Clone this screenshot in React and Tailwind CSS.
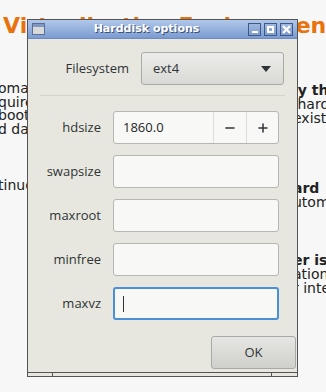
import { Minus, Plus } from 'lucide-react';

const fields = ['swapsize', 'maxroot', 'minfree'];

const PageText = () => (
  <div className="relative h-[392px] overflow-hidden bg-[#f7f7f7] font-['DejaVu_Sans',sans-serif] text-[#222]">
    <h1 className="absolute left-[3px] top-[9px] whitespace-nowrap text-[22px] font-bold text-[#e8720c]">
      Virtualisation Environment
    </h1>
    <div className="absolute left-[-2px] top-[82px] text-[14px] leading-[13.5px] whitespace-nowrap">
      <p>omatically</p>
      <p>quires</p>
      <p>boot the</p>
      <p>d data</p>
      <p className="mt-[43px]">tinue</p>
    </div>
    <div className="absolute left-[293px] top-[83px] text-[14px] leading-[14px] whitespace-nowrap">
      <p className="font-bold">ly the</p>
      <p>&nbsp;hard</p>
      <p>existing</p>
      <p className="mt-[56px] font-bold">ard</p>
      <p>utom</p>
      <p className="mt-[44px] font-bold">er is</p>
      <p>ation</p>
      <p>r inte</p>
    </div>
  </div>
);

const TitleButton = ({ children }) => (
  <div className="flex h-[13px] w-[13px] items-center justify-center border border-[#3e5a8a] bg-gradient-to-b from-[#9fb8de] to-[#7f9ccc]">
    {children}
  </div>
);

const Row = ({ label, children }) => (
  <div className="flex h-[33px] items-center gap-[12px]">
    <span className="w-[73px] text-right">{label}</span>
    <div className="w-[166px]">{children}</div>
  </div>
);

const Entry = ({ focused, children }) => (
  <div
    className={
      focused
        ? 'flex h-[33px] items-center rounded-[3px] border-2 border-[#4a90d9] bg-[#f8f8f7] px-[8px]'
        : 'flex h-[33px] items-center rounded-[3px] border border-[#b6b6b2] bg-[#f8f8f7] px-[9px]'
    }
  >
    {children}
  </div>
);

export default function App() {
  return (
    <div className="relative w-[326px] h-[392px]">
      <PageText />

      {/* dialog window */}
      <div className="absolute left-[27px] top-[19px] w-[271px] border border-[#545454] font-['Open_Sans',sans-serif] text-[13px] text-[#2e3436]">
        <div className="flex h-[19px] items-center border-b border-[#6b8cc0] bg-gradient-to-b from-[#b1c8ea] to-[#7b9bd0] px-[4px]">
          <div className="flex h-[12px] w-[13px] flex-col border border-[#5a6f93] bg-[#d9d9d9]">
            <div className="h-[3px] bg-[#7e97c3]" />
          </div>
          <div className="flex-1 text-center font-['DejaVu_Sans',sans-serif] text-[11px] font-bold text-white [text-shadow:1px_1px_0_#3a4f75]">
            Harddisk options
          </div>
          <div className="flex gap-[3px]">
            <TitleButton>
              <div className="mt-[5px] h-[2px] w-[6px] bg-white" />
            </TitleButton>
            <TitleButton>
              <div className="h-[7px] w-[7px] border-2 border-white" />
            </TitleButton>
            <TitleButton>
              <svg width="9" height="9" viewBox="0 0 9 9">
                <path d="M1 1L8 8M8 1L1 8" stroke="white" strokeWidth="2.2" />
                <rect x="3" y="3" width="3" height="3" fill="white" />
              </svg>
            </TitleButton>
          </div>
        </div>

        <div className="flex flex-col bg-[#e8e7df] pt-[13px] pb-[3px]">
          <div className="flex items-center gap-[12px]">
            <span className="w-[101px] text-right">Filesystem</span>
            <div className="flex h-[33px] w-[143px] items-center justify-between rounded-[3px] border border-[#a9a9a5] bg-gradient-to-b from-[#ececea] to-[#d9d9d5] pl-[11px] pr-[12px]">
              <span>ext4</span>
              <svg width="10" height="6" viewBox="0 0 10 6">
                <path d="M0 0H10L5 6Z" fill="#2e3436" />
              </svg>
            </div>
          </div>

          <div className="mx-[12px] mt-[10px] h-px w-[245px] bg-[#d3d2cb]" />

          <div className="mt-[15px] flex flex-col gap-[11px]">
            <Row label="hdsize">
              <div className="flex h-[33px] rounded-[3px] border border-[#b6b6b2] bg-[#f8f8f7]">
                <span className="flex w-[99px] items-center pl-[9px] text-[#1f1f1f]">1860.0</span>
                <span className="flex w-[33px] items-center justify-center border-l border-[#dcdcd8]">
                  <Minus size={14} strokeWidth={2.6} className="text-[#2e3436]" />
                </span>
                <span className="flex w-[32px] items-center justify-center border-l border-[#dcdcd8]">
                  <Plus size={14} strokeWidth={2.6} className="text-[#2e3436]" />
                </span>
              </div>
            </Row>

            {fields.map((f) => (
              <Row key={f} label={f}>
                <Entry />
              </Row>
            ))}

            <Row label="maxvz">
              <Entry focused>
                <div className="h-[16px] w-px bg-[#2e3436]" />
              </Entry>
            </Row>
          </div>

          <div className="mt-[16px] flex justify-end pr-px">
            <button className="h-[33px] w-[85px] rounded-[3px] border border-[#a9a9a5] bg-gradient-to-b from-[#e6e6e4] to-[#cfcfcb] text-[#2e3436]">
              OK
            </button>
          </div>
        </div>

        <div className="flex h-[4px] border-t border-[#545454] bg-[#e8e7df]">
          <div className="w-[25px] border-r border-[#545454]" />
          <div className="flex-1 border-r border-[#545454]" />
          <div className="w-[25px]" />
        </div>
      </div>
    </div>
  );
}
